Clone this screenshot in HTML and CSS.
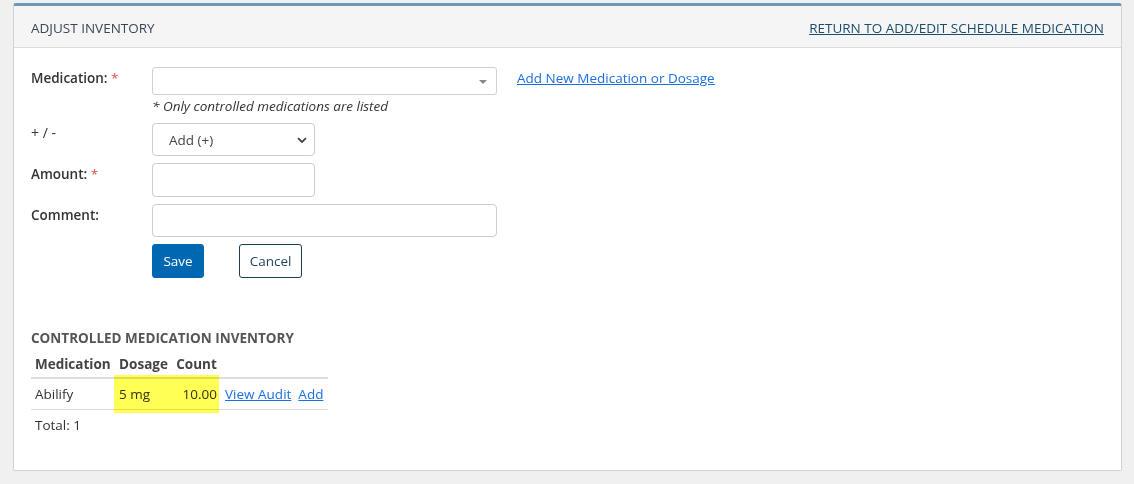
FILE: index.html
```html
<!DOCTYPE html>
<html>
<head>
<meta charset="utf-8">
<link rel="stylesheet" href="styles.css">
</head>
<body>
<div class="panel">
  <div class="panel-head">
    <span class="title">ADJUST INVENTORY</span>
    <a class="return-link" href="#">RETURN TO ADD/EDIT SCHEDULE MEDICATION</a>
  </div>
  <div class="panel-body">
    <div class="form">
      <div class="row row-med">
        <label class="lbl">Medication: <span class="req">*</span></label>
        <div class="field">
          <div class="combo-line">
            <div class="combo"><span class="caret"></span></div>
            <a class="add-new" href="#">Add New Medication or Dosage</a>
          </div>
          <div class="hint">* Only controlled medications are listed</div>
        </div>
      </div>
      <div class="row row-pm">
        <label class="lbl">+ / -</label>
        <div class="field">
          <div class="select">
            <span>Add (+)</span>
            <svg class="chev" width="10" height="7" viewBox="0 0 10 7"><path d="M1 1.2 L5 5 L9 1.2" fill="none" stroke="#444" stroke-width="1.8"/></svg>
          </div>
        </div>
      </div>
      <div class="row row-amt">
        <label class="lbl">Amount: <span class="req">*</span></label>
        <div class="field"><div class="input short"></div></div>
      </div>
      <div class="row row-cmt">
        <label class="lbl">Comment:</label>
        <div class="field"><div class="input long"></div></div>
      </div>
      <div class="row row-btn">
        <div class="lbl"></div>
        <div class="field buttons">
          <button class="btn save">Save</button>
          <button class="btn cancel">Cancel</button>
        </div>
      </div>
    </div>

    <h3 class="section">CONTROLLED MEDICATION INVENTORY</h3>
    <div class="inv-wrap">
      <table class="inv">
        <thead>
          <tr><th>Medication</th><th>Dosage</th><th>Count</th><th></th></tr>
        </thead>
        <tbody>
          <tr>
            <td>Abilify</td>
            <td>5 mg</td>
            <td class="num">10.00</td>
            <td class="links"><a href="#">View Audit</a><a href="#">Add</a></td>
          </tr>
        </tbody>
      </table>
      <span class="marker"></span>
    </div>
    <div class="total">Total: 1</div>
  </div>
</div>
</body>
</html>
```

FILE: styles.css
```css
html, body {
  margin: 0;
  padding: 0;
  background: #f0f0f0;
  font-family: "Open Sans", "Noto Sans", sans-serif;
  font-size: 13.5px;
  color: #333;
}

.panel {
  margin: 3px 0 0 13px;
  width: 1109px;
  height: 468px;
  background: #fff;
  border: 1px solid #d2d2d2;
  border-top: 3px solid #6b97ba;
  border-radius: 3px 3px 2px 2px;
  box-sizing: border-box;
}

.panel-head {
  height: 42px;
  background: #f5f5f5;
  border-bottom: 1px solid #dcdcdc;
  display: flex;
  align-items: center;
  justify-content: space-between;
  padding: 3px 17px 0 17px;
  box-sizing: border-box;
}

.title {
  color: #3b4654;
}

.return-link {
  color: #1b4d6d;
  text-decoration: underline;
}

.panel-body {
  padding: 19px 17px 0 17px;
}

.form {
  display: flex;
  flex-direction: column;
}

.row {
  display: flex;
}

.lbl {
  width: 121px;
  flex: none;
  font-weight: 600;
  color: #333;
  padding-top: 2px;
}

.req { color: #d9534f; font-weight: 400; }

.field { display: flex; flex-direction: column; }

.combo-line { display: flex; align-items: flex-start; }

.combo {
  width: 345px;
  height: 28px;
  box-sizing: border-box;
  border: 1px solid #d0d0d0;
  border-radius: 3px;
  position: relative;
}

.caret {
  position: absolute;
  right: 9px;
  top: 12px;
  width: 0;
  height: 0;
  border-left: 4px solid transparent;
  border-right: 4px solid transparent;
  border-top: 4px solid #888;
}

.add-new {
  margin-left: 20px;
  margin-top: 2px;
  color: #1a6fe0;
  text-decoration: underline;
}

.hint {
  font-style: italic;
  color: #333;
  margin-top: 2px;
  line-height: 18px;
}

.row-pm { margin-top: 8px; }
.row-pm .lbl { font-weight: 400; padding-top: 0; font-size: 14px; }

.select {
  width: 163px;
  height: 33px;
  box-sizing: border-box;
  border: 1px solid #ccc;
  border-radius: 4px;
  display: flex;
  align-items: center;
  justify-content: space-between;
  padding: 0 7px 0 16px;
  color: #444;
}

.chev { margin-top: 1px; }

.input {
  box-sizing: border-box;
  border: 1px solid #ccc;
  border-radius: 4px;
}
.input.short { width: 163px; height: 34px; }
.input.long { width: 345px; height: 33px; }

.row-amt { margin-top: 7px; }
.row-cmt { margin-top: 7px; }
.row-btn { margin-top: 7px; }

.buttons { flex-direction: row; gap: 35px; }

.btn {
  height: 34px;
  border-radius: 3px;
  font-family: "Open Sans", "Noto Sans", sans-serif;
  font-size: 13.5px;
  padding: 0 6px;
  cursor: pointer;
}

.btn.save {
  background: #0068b3;
  color: #fff;
  border: 1px solid #0068b3;
  width: 52px;
}

.btn.cancel {
  background: #fff;
  color: #1c3f57;
  border: 1px solid #1c3f57;
  width: 63px;
}

.section {
  margin: 51px 0 0 0;
  font-size: 13.5px;
  line-height: 18px;
  font-weight: 700;
  color: #555;
}

.inv-wrap {
  position: relative;
  margin-top: 8px;
  width: 297px;
}

.inv {
  border-collapse: collapse;
  width: 297px;
}

.inv th {
  text-align: left;
  font-weight: 700;
  color: #444;
  padding: 0 4px 4px 4px;
  line-height: 18px;
  border-bottom: 2px solid #dddddd;
  white-space: nowrap;
}

.inv td {
  padding: 6px 4px 6px 4px;
  line-height: 18px;
  border-bottom: 1px solid #dddddd;
  white-space: nowrap;
}

.inv td.num { text-align: right; }

.inv td.links a {
  color: #1a6fe0;
  text-decoration: underline;
  margin-right: 7px;
}
.inv td.links a:last-child { margin-right: 0; }

.marker {
  position: absolute;
  left: 83px;
  top: 20px;
  width: 105px;
  height: 38px;
  background: #ffff55;
  mix-blend-mode: multiply;
}

.total {
  margin-top: 6px;
  padding-left: 4px;
  line-height: 18px;
}
```
